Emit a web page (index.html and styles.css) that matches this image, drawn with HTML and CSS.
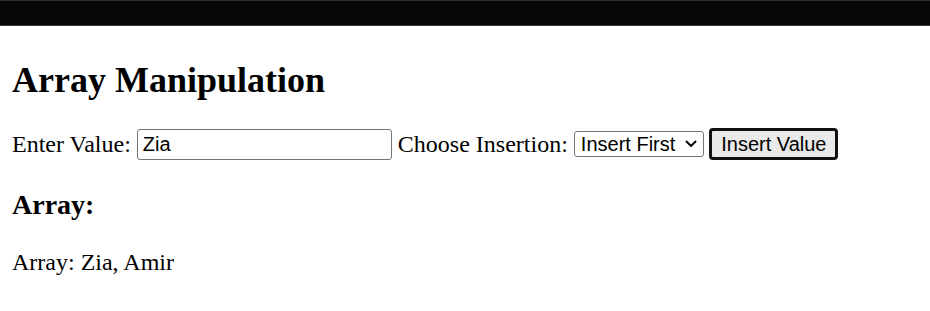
FILE: index.html
```html
<!DOCTYPE html>
<html>
<head>
<meta charset="utf-8">
<link rel="stylesheet" href="styles.css">
</head>
<body>
<div class="topbar"></div>
<main class="page">
  <h1 class="title">Array Manipulation</h1>
  <div class="controls">
    <label class="label" for="val">Enter Value:</label>
    <input class="text-input" id="val" type="text" value="Zia">
    <label class="label" for="mode">Choose Insertion:</label>
    <span class="select">Insert First<svg class="chev" viewBox="0 0 12 8" width="12" height="8"><path d="M1.5 1.5 L6 6 L10.5 1.5" fill="none" stroke="#000" stroke-width="1.9" stroke-linecap="round" stroke-linejoin="round"/></svg></span>
    <button class="btn" type="button">Insert Value</button>
  </div>
  <h3 class="subtitle">Array:</h3>
  <p class="result">Array: Zia, Amir</p>
</main>
</body>
</html>
```
FILE: styles.css
```css
html, body {
  margin: 0;
  padding: 0;
  background: #fff;
}
body {
  font-family: "Liberation Serif", "Times New Roman", serif;
  font-size: 24px;
  color: #000;
}
.topbar {
  height: 24px;
  background: #080808;
  border-top: 1px solid #2e2e2e;
  border-bottom: 1px solid #3a3a3a;
}
.page {
  padding: 0 12px;
}
.title {
  font-size: 36px;
  font-weight: bold;
  margin: 33px 0 0 0;
  line-height: 42px;
}
.controls {
  display: flex;
  align-items: center;
  margin-top: 27px;
  height: 32px;
  white-space: nowrap;
}
.label {
  line-height: 32px;
}
.text-input {
  box-sizing: border-box;
  width: 255px;
  height: 31px;
  margin: 0 6px 0 6px;
  padding: 0 5px;
  border: 1px solid #767676;
  border-radius: 3px;
  font-family: "Liberation Sans", Arial, sans-serif;
  font-size: 20px;
  color: #000;
  background: #fff;
}
.select {
  box-sizing: border-box;
  display: inline-flex;
  align-items: center;
  justify-content: space-between;
  width: 130px;
  height: 26px;
  margin-left: 6px;
  padding: 0 6px 0 6px;
  border: 1px solid #767676;
  border-radius: 3px;
  font-family: "Liberation Sans", Arial, sans-serif;
  font-size: 20px;
  background: #fff;
}
.chev {
  display: block;
}
.btn {
  box-sizing: border-box;
  width: 129px;
  height: 32px;
  margin-left: 5px;
  padding: 0 0 0 1px;
  border: 3px solid #111;
  border-radius: 4px;
  background: #e9e9e9;
  font-family: "Liberation Sans", Arial, sans-serif;
  font-size: 20px;
  color: #000;
}
.subtitle {
  font-size: 28px;
  font-weight: bold;
  margin: 29px 0 0 0;
  line-height: 32px;
}
.result {
  margin: 27px 0 0 0;
  line-height: 28px;
}
```
